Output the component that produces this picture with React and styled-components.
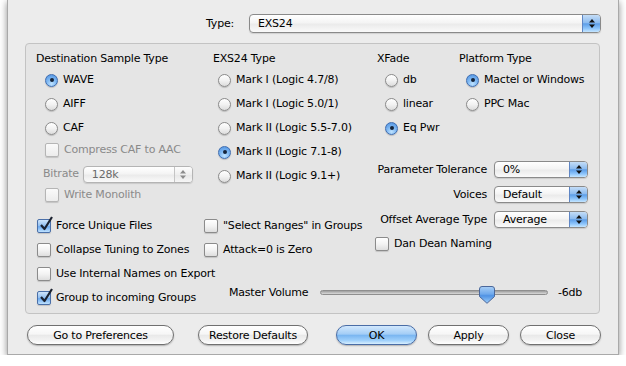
import React from 'react';
import styled, { createGlobalStyle } from 'styled-components';

const GlobalStyle = createGlobalStyle`
  body {
    margin: 0;
    background: #fff;
    font-family: "DejaVu Sans", "Noto Sans", sans-serif;
    font-size: 11px;
    letter-spacing: -0.2px;
    color: #000;
  }
`;

const Window = styled.div`
  box-sizing: border-box;
  width: 612px;
  height: 355px;
  margin-left: 7px;
  background: #ececec;
  border: 1px solid #a9a9a9;
  border-top: none;
  box-shadow: 0 2px 7px rgba(0, 0, 0, 0.45);
  display: flex;
  flex-direction: column;
`;

const TypeRow = styled.div`
  display: flex;
  align-items: center;
  justify-content: flex-end;
  gap: 15px;
  padding: 14px 17px 0 0;
`;

const Text = styled.span`
  line-height: 14px;
  white-space: nowrap;
  color: ${p => (p.$disabled ? '#8a8a8a' : '#000')};
`;

const PopupBox = styled.div`
  box-sizing: border-box;
  width: ${p => p.$w}px;
  height: ${p => p.$h}px;
  display: flex;
  align-items: stretch;
  border: 1px solid ${p => (p.$disabled ? '#b4b4b4' : '#8a8a8a')};
  border-radius: 4px;
  background: linear-gradient(#ffffff 0%, #f4f4f4 45%, #ebebeb 55%, #fafafa 100%);
  box-shadow: 0 1px 1px rgba(0, 0, 0, 0.12);
  overflow: hidden;
`;

const PopupText = styled.span`
  flex: 1;
  display: flex;
  align-items: center;
  padding-left: 8px;
  white-space: nowrap;
  color: ${p => (p.$disabled ? '#6a6a6a' : '#000')};
`;

const PopupArrows = styled.span`
  width: 17px;
  display: flex;
  align-items: center;
  justify-content: center;
  border-left: 1px solid ${p => (p.$disabled ? '#c4c4c4' : '#5f86c4')};
  background: ${p =>
    p.$disabled
      ? 'linear-gradient(#fdfdfd, #eeeeee 50%, #e6e6e6 51%, #f6f6f6)'
      : 'linear-gradient(#c4ddf7 0%, #8dbcf0 45%, #5d9ee8 52%, #8fc6fb 80%, #c6e6ff 100%)'};
`;

function Popup({ value, width, height = 17, disabled }) {
  const fill = disabled ? '#8c8c8c' : '#111';
  return (
    <PopupBox $w={width} $h={height} $disabled={disabled}>
      <PopupText $disabled={disabled}>{value}</PopupText>
      <PopupArrows $disabled={disabled}>
        <svg width="6" height="9" viewBox="0 0 6 9">
          <path d="M3 0 L6 3.4 H0 Z" fill={fill} />
          <path d="M3 9 L6 5.6 H0 Z" fill={fill} />
        </svg>
      </PopupArrows>
    </PopupBox>
  );
}

const GroupBox = styled.div`
  box-sizing: border-box;
  height: 271px;
  margin: 10px 18px 0 17px;
  padding: 8px 0 0 10px;
  border: 1px solid #c3c3c3;
  border-radius: 4px;
  background: #e5e5e5;
  display: grid;
  grid-template-columns: 168px 171px 1fr;
  grid-template-rows: 162px repeat(4, 24px);
`;

const Cell = styled.div`
  grid-column: ${p => p.$col};
  grid-row: ${p => p.$row};
  display: flex;
  flex-direction: column;
  align-self: ${p => p.$align || 'stretch'};
`;

const Header = styled.div`
  height: 14px;
  line-height: 14px;
  padding-left: ${p => p.$indent || 0}px;
  white-space: nowrap;
`;

const List = styled.div`
  margin-top: 2px;
  display: flex;
  flex-direction: column;
`;

const OptionRow = styled.label`
  display: flex;
  align-items: center;
  gap: ${p => p.$gap ?? 5}px;
  height: ${p => p.$h || 24}px;
  padding-left: ${p => p.$indent || 0}px;
`;

const Radio = styled.span`
  position: relative;
  flex-shrink: 0;
  box-sizing: border-box;
  width: 13px;
  height: 13px;
  border-radius: 50%;
  border: 1px solid ${p => (p.$on ? '#3f6db0' : '#8b8b8b')};
  background: ${p =>
    p.$on
      ? 'radial-gradient(circle at 50% 80%, #bfe3ff 0%, #7fb8f2 45%, #4b8fe0 100%)'
      : 'linear-gradient(#ffffff, #f2f2f2 50%, #dcdcdc)'};
  box-shadow: 0 1px 1px rgba(0, 0, 0, 0.18);

  &::after {
    content: '';
    display: ${p => (p.$on ? 'block' : 'none')};
    position: absolute;
    left: 3.5px;
    top: 3.5px;
    width: 4px;
    height: 4px;
    border-radius: 50%;
    background: #15243a;
  }
`;

const CheckBox = styled.span`
  position: relative;
  flex-shrink: 0;
  box-sizing: border-box;
  width: 14px;
  height: 14px;
  border-radius: 2px;
  border: 1px solid ${p => (p.$on ? '#4a6fa8' : p.$disabled ? '#b5b5b5' : '#8b8b8b')};
  background: ${p =>
    p.$on
      ? 'linear-gradient(#cfe5fb, #8fbef0 50%, #6aa8ee 55%, #bfe2ff)'
      : p.$disabled
      ? 'linear-gradient(#fafafa, #ececec)'
      : 'linear-gradient(#ffffff, #f3f3f3 50%, #dedede)'};
  box-shadow: 0 1px 1px rgba(0, 0, 0, 0.15);

  svg {
    position: absolute;
    left: 1px;
    top: -4px;
    overflow: visible;
  }
`;

function Check({ on, disabled }) {
  return (
    <CheckBox $on={on} $disabled={disabled}>
      {on && (
        <svg width="14" height="15" viewBox="0 0 14 15">
          <path d="M2 9 L5.5 13 L13 1" fill="none" stroke="#1b2230" strokeWidth="2.2" strokeLinejoin="round" />
        </svg>
      )}
    </CheckBox>
  );
}

const Pair = styled.div`
  display: flex;
`;

const SubCol = styled.div`
  display: flex;
  flex-direction: column;
  width: ${p => (p.$w ? `${p.$w}px` : 'auto')};
  margin-left: ${p => p.$ml || 0}px;
`;

const Form = styled.div`
  margin-top: 17px;
  display: grid;
  grid-template-columns: 112px 94px;
  grid-auto-rows: 25px;
  column-gap: 7px;
  align-items: center;
`;

const FormLabel = styled.span`
  text-align: right;
  white-space: nowrap;
  line-height: 14px;
`;

const MasterRow = styled.div`
  height: 12px;
  display: flex;
  align-items: center;
  padding-left: 25px;
`;

const MasterLabel = styled.span`
  width: 91px;
  white-space: nowrap;
`;

const Track = styled.div`
  position: relative;
  box-sizing: border-box;
  width: 228px;
  height: 5px;
  border-radius: 3px;
  border: 1px solid #8e8e8e;
  background: linear-gradient(#9c9c9c, #c2c2c2 60%, #d8d8d8);
`;

const Thumb = styled.svg`
  position: absolute;
  top: -5px;
`;

const DbText = styled.span`
  margin-left: 10px;
  white-space: nowrap;
`;

const ButtonBar = styled.div`
  display: flex;
  justify-content: space-between;
  margin-top: 11px;
  padding: 0 17px 0 19px;
`;

const ButtonGroup = styled.div`
  display: flex;
  gap: ${p => p.$gap}px;
`;

const PushButton = styled.button`
  box-sizing: border-box;
  width: ${p => p.$w}px;
  height: 20px;
  padding: 0;
  border-radius: 10px;
  border: 1px solid ${p => (p.$primary ? '#4a6da6' : '#707070')};
  background: ${p =>
    p.$primary
      ? 'linear-gradient(#d2e8fd 0%, #a3cdf6 45%, #7ab6f1 52%, #9fd0fb 80%, #d8efff 100%)'
      : 'linear-gradient(#ffffff 0%, #f6f6f6 45%, #e9e9e9 52%, #f3f3f3 80%, #ffffff 100%)'};
  box-shadow: 0 1px 1.5px rgba(0, 0, 0, 0.25);
  font-family: inherit;
  font-size: 11px;
  letter-spacing: -0.2px;
  color: #000;
`;

const destTypes = [
  { label: 'WAVE', on: true },
  { label: 'AIFF' },
  { label: 'CAF' },
];

const exsTypes = [
  { label: 'Mark I (Logic 4.7/8)' },
  { label: 'Mark I (Logic 5.0/1)' },
  { label: 'Mark II (Logic 5.5-7.0)' },
  { label: 'Mark II (Logic 7.1-8)', on: true },
  { label: 'Mark II (Logic 9.1+)' },
];

const xfades = [{ label: 'db' }, { label: 'linear' }, { label: 'Eq Pwr', on: true }];
const platforms = [{ label: 'Mactel or Windows', on: true }, { label: 'PPC Mac' }];

const options = [
  { label: 'Force Unique Files', on: true, col: 1, row: 2, indent: 1 },
  { label: '"Select Ranges" in Groups', col: 2, row: 2 },
  { label: 'Collapse Tuning to Zones', col: 1, row: 3, indent: 1 },
  { label: 'Attack=0 is Zero', col: 2, row: 3 },
  { label: 'Use Internal Names on Export', col: 1, row: 4, indent: 1 },
  { label: 'Group to incoming Groups', on: true, col: 1, row: 5, indent: 1 },
];

function RadioList({ items, indent }) {
  return (
    <List>
      {items.map(item => (
        <OptionRow key={item.label} $indent={indent}>
          <Radio $on={item.on} />
          <Text>{item.label}</Text>
        </OptionRow>
      ))}
    </List>
  );
}

export default function App() {
  const trackWidth = 228;
  const thumbWidth = 16;
  const volume = 0.751;

  return (
    <>
      <GlobalStyle />
      <Window>
        <TypeRow>
          <Text>Type:</Text>
          <Popup value="EXS24" width={352} height={19} />
        </TypeRow>

        <GroupBox>
          <Cell $col="1" $row="1">
            <Header>Destination Sample Type</Header>
            <RadioList items={destTypes} indent={9} />
            <OptionRow $h={20} $indent={9}>
              <Check disabled />
              <Text $disabled>Compress CAF to AAC</Text>
            </OptionRow>
            <OptionRow $h={28} $indent={7} $gap={4}>
              <Text $disabled>Bitrate</Text>
              <Popup value="128k" width={110} disabled />
            </OptionRow>
            <OptionRow $h={14} $indent={9}>
              <Check disabled />
              <Text $disabled>Write Monolith</Text>
            </OptionRow>
          </Cell>

          <Cell $col="2" $row="1">
            <Header $indent={9}>EXS24 Type</Header>
            <RadioList items={exsTypes} indent={14} />
          </Cell>

          <Cell $col="3" $row="1 / 4">
            <Pair>
              <SubCol $w={82} $ml={2}>
                <Header>XFade</Header>
                <RadioList items={xfades} indent={8} />
              </SubCol>
              <SubCol>
                <Header>Platform Type</Header>
                <RadioList items={platforms} indent={7} />
              </SubCol>
            </Pair>
            <Form>
              <FormLabel>Parameter Tolerance</FormLabel>
              <Popup value="0%" width={94} />
              <FormLabel>Voices</FormLabel>
              <Popup value="Default" width={94} />
              <FormLabel>Offset Average Type</FormLabel>
              <Popup value="Average" width={94} />
            </Form>
            <OptionRow>
              <Check />
              <Text>Dan Dean Naming</Text>
            </OptionRow>
          </Cell>

          {options.map(opt => (
            <Cell key={opt.label} $col={String(opt.col)} $row={String(opt.row)}>
              <OptionRow $indent={opt.indent}>
                <Check on={opt.on} />
                <Text>{opt.label}</Text>
              </OptionRow>
            </Cell>
          ))}

          <Cell $col="2 / 4" $row="5" $align="start">
            <MasterRow>
              <MasterLabel>Master Volume</MasterLabel>
              <Track>
                <Thumb
                  width="16"
                  height="18"
                  viewBox="0 0 16 18"
                  style={{ left: Math.round(volume * (trackWidth - thumbWidth)) - 1 }}
                >
                  <defs>
                    <linearGradient id="thumbFill" x1="0" y1="0" x2="0" y2="1">
                      <stop offset="0" stopColor="#a9cff6" />
                      <stop offset="0.45" stopColor="#6fa9ec" />
                      <stop offset="0.55" stopColor="#4f92e4" />
                      <stop offset="1" stopColor="#9fd0fb" />
                    </linearGradient>
                  </defs>
                  <path
                    d="M3 0.5 H13 Q15.5 0.5 15.5 3 V10.5 L8 17.3 L0.5 10.5 V3 Q0.5 0.5 3 0.5 Z"
                    fill="url(#thumbFill)"
                    stroke="#4b679a"
                    strokeWidth="1"
                  />
                </Thumb>
              </Track>
              <DbText>-6db</DbText>
            </MasterRow>
          </Cell>
        </GroupBox>

        <ButtonBar>
          <ButtonGroup $gap={24}>
            <PushButton $w={147}>Go to Preferences</PushButton>
            <PushButton $w={110}>Restore Defaults</PushButton>
          </ButtonGroup>
          <ButtonGroup $gap={11}>
            <PushButton $w={81} $primary>OK</PushButton>
            <PushButton $w={81}>Apply</PushButton>
            <PushButton $w={81}>Close</PushButton>
          </ButtonGroup>
        </ButtonBar>
      </Window>
    </>
  );
}
